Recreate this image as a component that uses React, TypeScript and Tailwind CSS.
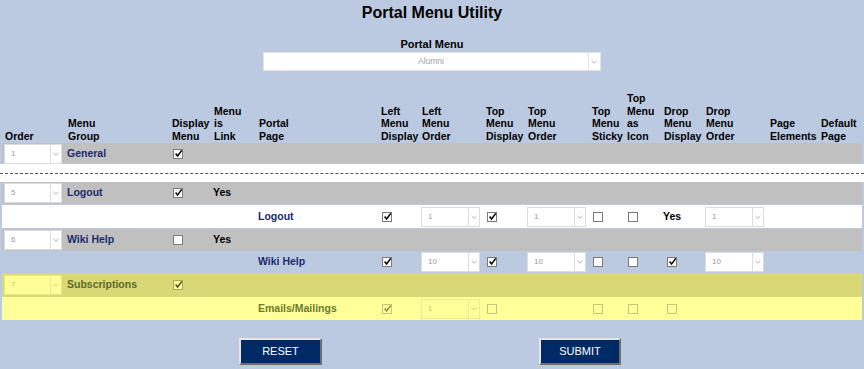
type Tone = "white" | "olive" | "faded";

interface Row {
  kind: "group" | "page";
  bg: string;
  order?: string;
  group?: string;
  groupColor?: string;
  display?: boolean;
  isLink?: string;
  page?: string;
  pageColor?: string;
  leftDisp?: boolean;
  leftOrder?: string;
  topDisp?: boolean;
  topOrder?: string;
  sticky?: boolean;
  icon?: boolean;
  dropDisp?: boolean | string;
  dropOrder?: string;
  tone: Tone;
  h: string;
}

const rows: Row[] = [
  {
    kind: "group",
    bg: "bg-[#c0c0c0]",
    order: "5",
    group: "Logout",
    groupColor: "text-[#1c2a6e]",
    display: true,
    isLink: "Yes",
    tone: "white",
    h: "h-[22px]",
  },
  {
    kind: "page",
    bg: "bg-white",
    page: "Logout",
    pageColor: "text-[#1c2a6e]",
    leftDisp: true,
    leftOrder: "1",
    topDisp: true,
    topOrder: "1",
    sticky: false,
    icon: false,
    dropDisp: "Yes",
    dropOrder: "1",
    tone: "white",
    h: "h-[23px] mt-px",
  },
  {
    kind: "group",
    bg: "bg-[#c0c0c0]",
    order: "6",
    group: "Wiki Help",
    groupColor: "text-[#1c2a6e]",
    display: false,
    isLink: "Yes",
    tone: "white",
    h: "h-[22px] mt-px",
  },
  {
    kind: "page",
    bg: "",
    page: "Wiki Help",
    pageColor: "text-[#1c2a6e]",
    leftDisp: true,
    leftOrder: "10",
    topDisp: true,
    topOrder: "10",
    sticky: false,
    icon: false,
    dropDisp: true,
    dropOrder: "10",
    tone: "white",
    h: "h-[22px]",
  },
  {
    kind: "group",
    bg: "bg-[#d8d877]",
    order: "7",
    group: "Subscriptions",
    groupColor: "text-[#5d6a27]",
    display: true,
    tone: "olive",
    h: "h-[24px]",
  },
  {
    kind: "page",
    bg: "bg-[#ffff99]",
    page: "Emails/Mailings",
    pageColor: "text-[#6b7a2c]",
    leftDisp: true,
    leftOrder: "1",
    topDisp: false,
    sticky: false,
    icon: false,
    dropDisp: false,
    tone: "faded",
    h: "h-[23px]",
  },
];

const cols =
  "grid grid-cols-[63px_104px_42px_45px_122px_41px_64px_42px_64px_35px_37px_42px_64px_51px_43px]";

const Chevron = ({ color }: { color: string }) => (
  <svg width="6" height="4" viewBox="0 0 6 4" fill="none">
    <path d="M0.5 0.8 L3 3.2 L5.5 0.8" stroke={color} strokeWidth="0.9" />
  </svg>
);

const Select = ({ value, tone, w }: { value: string; tone: Tone; w: string }) => {
  const box =
    tone === "white"
      ? "bg-white border-[#dcdcdc]"
      : tone === "olive"
        ? "bg-[#ffff99] border-[#e6e68c]"
        : "bg-[#ffff99] border-[#ecec8e]";
  const txt = tone === "white" ? "text-[#9a9a9a]" : "text-[#c4c470]";
  return (
    <div className={`flex h-[20px] ${w} items-stretch border ${box}`}>
      <span className={`flex flex-1 items-center pl-[6px] text-[8px] ${txt}`}>{value}</span>
      <span className={`flex w-[11px] items-center justify-center border-l ${box}`}>
        <Chevron color={tone === "white" ? "#a8a8a8" : "#c8c878"} />
      </span>
    </div>
  );
};

const Check = ({ on, tone }: { on: boolean; tone: Tone }) => {
  const box =
    tone === "white"
      ? "bg-white border-[#7a7a7a]"
      : tone === "olive"
        ? "bg-[#ffff9c] border-[#a9a95a]"
        : "bg-[#ffff99] border-[#c6c67a]";
  const mark = tone === "white" ? "#000" : tone === "olive" ? "#4a4a1c" : "#8e8e3c";
  return (
    <span className={`relative ml-[2px] block h-[10px] w-[10px] border ${box}`}>
      {on && (
        <svg className="absolute -top-[1px] left-0" width="9" height="9" viewBox="0 0 10 10" fill="none">
          <path d="M1.8 5 L4 7.8 L8.6 1.5" stroke={mark} strokeWidth="1.7" />
        </svg>
      )}
    </span>
  );
};

const Cell = ({ children }: { children?: React.ReactNode }) => (
  <div className="flex items-center pl-[2px]">{children}</div>
);

const headers = [
  ["Order"],
  ["Menu", "Group"],
  ["Display", "Menu"],
  ["Menu", "is", "Link"],
  ["Portal", "Page"],
  ["Left", "Menu", "Display"],
  ["Left", "Menu", "Order"],
  ["Top", "Menu", "Display"],
  ["Top", "Menu", "Order"],
  ["Top", "Menu", "Sticky"],
  ["Top", "Menu", "as", "Icon"],
  ["Drop", "Menu", "Display"],
  ["Drop", "Menu", "Order"],
  ["Page", "Elements"],
  ["Default", "Page"],
];

const DataRow = ({ r }: { r: Row }) => {
  if (r.kind === "group") {
    return (
      <div className={`${cols} ${r.bg} ${r.h}`}>
        <Cell>
          <Select value={r.order ?? ""} tone={r.tone} w="w-[58px]" />
        </Cell>
        <Cell>
          <span className={`font-bold ${r.groupColor}`}>{r.group}</span>
        </Cell>
        <Cell>
          <Check on={!!r.display} tone={r.tone} />
        </Cell>
        <Cell>
          <span className="font-bold text-black">{r.isLink}</span>
        </Cell>
      </div>
    );
  }
  return (
    <div className={`${cols} ${r.bg} ${r.h}`}>
      <Cell />
      <Cell />
      <Cell />
      <Cell />
      <Cell>
        <span className={`font-bold ${r.pageColor}`}>{r.page}</span>
      </Cell>
      <Cell>
        <Check on={!!r.leftDisp} tone={r.tone} />
      </Cell>
      <Cell>{r.leftOrder && <Select value={r.leftOrder} tone={r.tone} w="w-[59px]" />}</Cell>
      <Cell>
        <Check on={!!r.topDisp} tone={r.tone} />
      </Cell>
      <Cell>{r.topOrder && <Select value={r.topOrder} tone={r.tone} w="w-[59px]" />}</Cell>
      <Cell>
        <Check on={!!r.sticky} tone={r.tone} />
      </Cell>
      <Cell>
        <Check on={!!r.icon} tone={r.tone} />
      </Cell>
      <Cell>
        {typeof r.dropDisp === "string" ? (
          <span className="font-bold text-black">{r.dropDisp}</span>
        ) : (
          <span className="ml-[2px]">
            <Check on={!!r.dropDisp} tone={r.tone} />
          </span>
        )}
      </Cell>
      <Cell>{r.dropOrder && <Select value={r.dropOrder} tone={r.tone} w="w-[59px]" />}</Cell>
      <Cell />
      <Cell />
    </div>
  );
};

export default function App() {
  return (
    <div className="h-[369px] w-[864px] overflow-hidden bg-[#bccae1] font-['Liberation_Sans',Arial,sans-serif] text-[10.5px] text-black">
      <h1 className="mt-[4px] text-center text-[16px] font-bold leading-[18px]">Portal Menu Utility</h1>

      <div className="mt-[16px] text-center text-[11px] font-bold leading-[13px]">Portal Menu</div>
      <div className="mt-[1px] flex justify-center">
        <div className="ml-[-1px] flex h-[19px] w-[338px] items-stretch border border-[#e2e2e2] bg-white">
          <span className="flex flex-1 items-center justify-center pl-[11px] text-[8.5px] text-[#a0a0a0]">Alumni</span>
          <span className="flex w-[12px] items-center justify-center border-l border-[#e2e2e2]">
            <Chevron color="#a8a8a8" />
          </span>
        </div>
      </div>

      <div className="mt-[21px] px-[2px]">
        <div className={`${cols} h-[50px] items-end font-bold leading-[12.5px]`}>
          {headers.map((h, i) => (
            <div key={i} className="pl-[3px]">
              {h.map((w) => (
                <div key={w}>{w}</div>
              ))}
            </div>
          ))}
        </div>

        <div className={`${cols} mt-[1px] h-[21px] bg-[#c0c0c0]`}>
          <Cell>
            <Select value="1" tone="white" w="w-[58px]" />
          </Cell>
          <Cell>
            <span className="font-bold text-[#1c2a6e]">General</span>
          </Cell>
          <Cell>
            <Check on tone="white" />
          </Cell>
        </div>
      </div>

      <div className="flex h-[18px] items-center bg-white">
        <div className="w-full border-t border-dashed border-[#555]" />
      </div>

      <div className="px-[2px]">
        {rows.map((r, i) => (
          <DataRow key={i} r={r} />
        ))}
      </div>

      <div className="mt-[18px] flex">
        <button className="ml-[239px] h-[27px] w-[83px] border-2 border-t-[#e6e6e6] border-l-[#e6e6e6] border-r-[#6f6f6f] border-b-[#6f6f6f] bg-[#002a66] text-[11px] text-white">
          RESET
        </button>
        <button className="ml-[217px] h-[27px] w-[82px] border-2 border-t-[#e6e6e6] border-l-[#e6e6e6] border-r-[#6f6f6f] border-b-[#6f6f6f] bg-[#002a66] text-[11px] text-white">
          SUBMIT
        </button>
      </div>
    </div>
  );
}
